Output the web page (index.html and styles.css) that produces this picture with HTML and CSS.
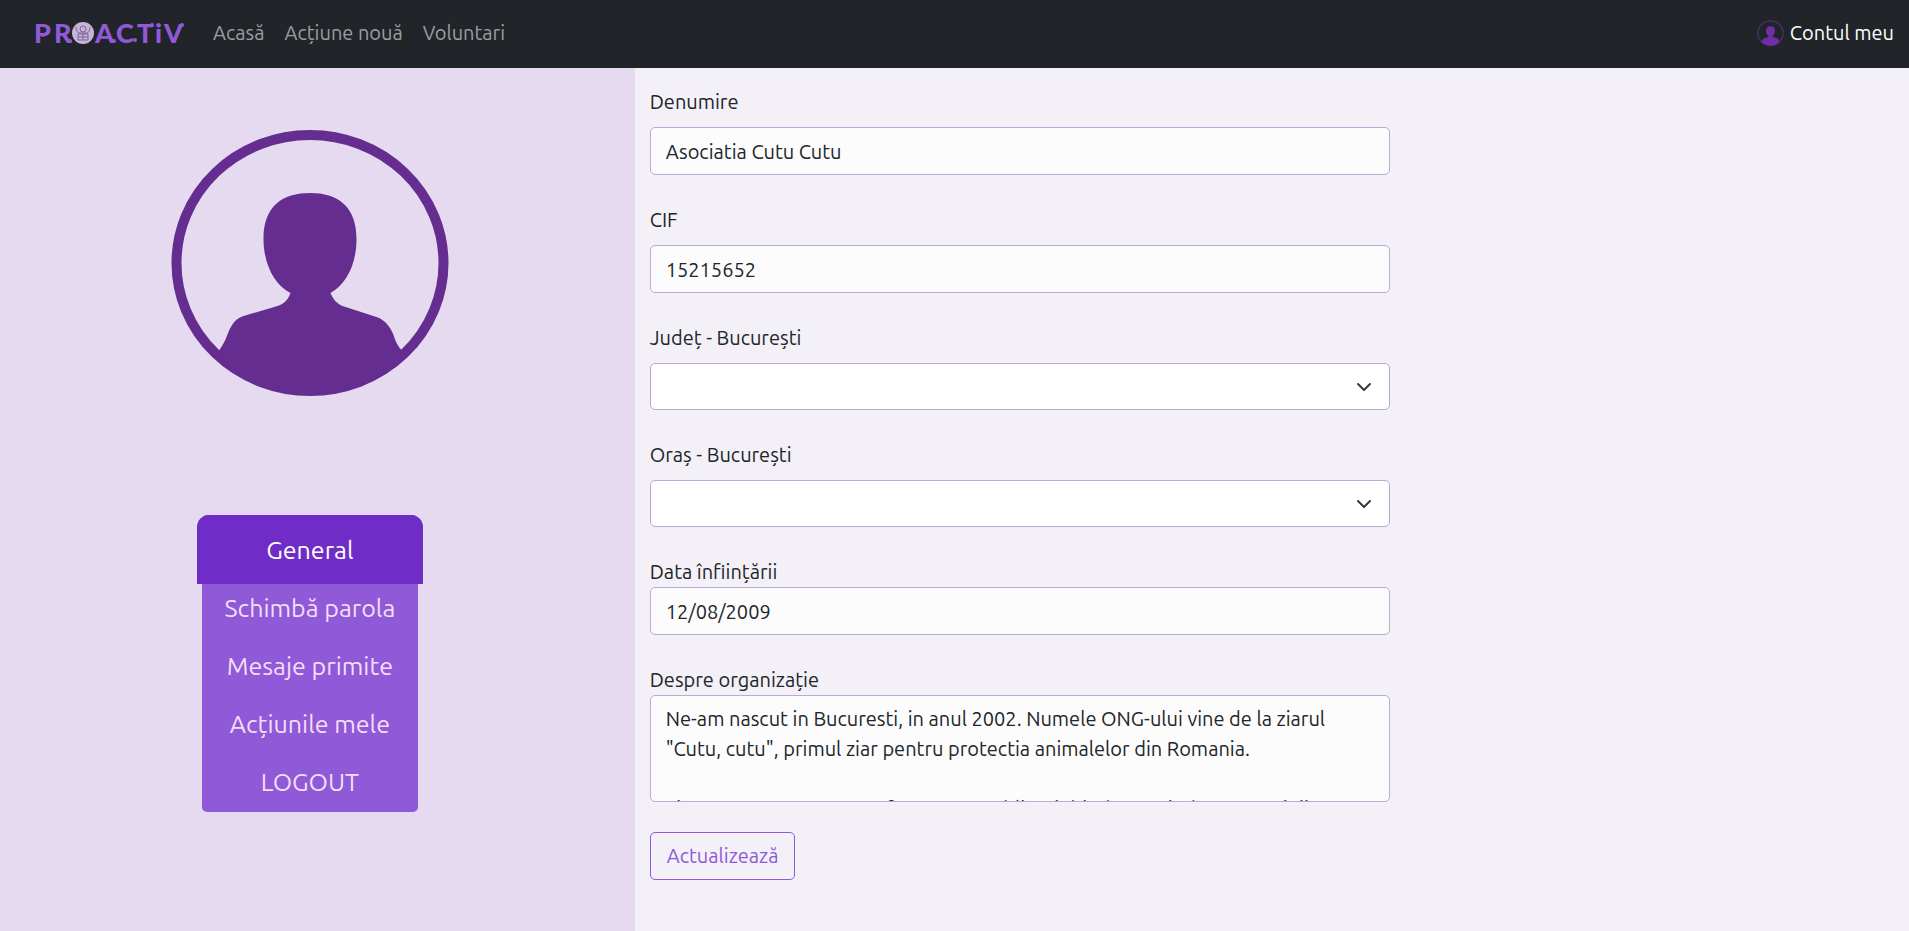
FILE: index.html
```html
<!DOCTYPE html>
<html lang="ro">
<head>
<meta charset="utf-8">
<title>Proactiv - Contul meu</title>
<link rel="stylesheet" href="styles.css">
</head>
<body>
<header class="navbar">
  <a class="brand" href="#" aria-label="Proactiv">
    <svg class="logo" width="152" height="36" viewBox="0 -6 152 36">
      <g class="logo-text">
        <text x="0 20 61 82 103 121 130" y="22">PRACTiV</text>
      </g>
      <g fill="#9059d8"><circle cx="9" cy="14" r="2"/><circle cx="36" cy="20" r="2"/><circle cx="80" cy="20" r="2"/><circle cx="101" cy="19" r="2"/><circle cx="118" cy="4" r="2"/><circle cx="148" cy="4" r="2"/></g>
      <circle cx="49" cy="12" r="11" fill="#c9b3dd"/>
      <g fill="none" stroke="#79678f" stroke-width="1"><circle cx="49" cy="8" r="3"/><path d="M42 6q0 6 4 6h6q4 0 4-6M44 13h10v6H44zM49 13v6M44 16h10"/></g>
    </svg>
  </a>
  <nav class="links">
    <a href="#">Acasă</a>
    <a href="#">Acțiune nouă</a>
    <a href="#">Voluntari</a>
  </nav>
  <a class="account" href="#">
    <svg class="account-icon" width="27" height="26" viewBox="0 0 277 266"><ellipse cx="138.500" cy="133" rx="130" ry="124" fill="none" stroke="#47306b" stroke-width="14"/><use href="#person"/></svg>
    <span>Contul meu</span>
  </a>
</header>
<main class="page">
  <aside class="sidebar">
    <svg class="avatar" width="278" height="266" viewBox="0 0 277 266" role="img" aria-label="Avatar">
      <ellipse cx="138.500" cy="133" rx="133.500" ry="128" fill="none" stroke="#652d90" stroke-width="10"/>
      <path id="person" d="M138.500 63C166 63 185 76 185 109C185 134 175 154 159 163C162 170 166 174 171 176L205 187C214 190 220 198 223 208C225 214 228 218 230 220L239 221C215 247 180 265 138.500 265C97 265 62 247 38 221L48 220C52 214 54 210 57 202C60 194 65 188 72 186L106 176C112 174 116 171 119 163C103 155 92 134 92 109C92 76 111 63 138.500 63Z"/>
    </svg>
    <nav class="menu">
      <a class="active" href="#">General</a>
      <a href="#">Schimbă parola</a>
      <a href="#">Mesaje primite</a>
      <a href="#">Acțiunile mele</a>
      <a href="#">LOGOUT</a>
    </nav>
  </aside>
  <section class="content">
    <form class="form">
      <div class="field spaced"><label for="name">Denumire</label><input id="name" type="text" value="Asociatia Cutu Cutu"></div>
      <div class="field spaced"><label for="cif">CIF</label><input id="cif" type="text" value="15215652"></div>
      <div class="field spaced"><label for="county">Județ - Bucureşti</label>
        <div class="select"><select id="county"><option></option></select><svg width="16" height="16" viewBox="0 0 16 16"><path d="M2 5l6 6 6-6"/></svg></div></div>
      <div class="field spaced"><label for="city">Oraș - Bucureşti</label>
        <div class="select"><select id="city"><option></option></select><svg width="16" height="16" viewBox="0 0 16 16"><path d="M2 5l6 6 6-6"/></svg></div></div>
      <div class="field"><label for="date">Data înființării</label><input id="date" type="text" value="12/08/2009"></div>
      <div class="field"><label for="about">Despre organizație</label><textarea id="about">Ne-am nascut in Bucuresti, in anul 2002. Numele ONG-ului vine de la ziarul "Cutu, cutu", primul ziar pentru protectia animalelor din Romania.

Si am crescut, ca o veste frumoasa, publica, iubind, ocrotind mereu cainii.</textarea></div>
      <button class="submit" type="button">Actualizează</button>
    </form>
  </section>
</main>
</body>
</html>
```
FILE: styles.css
```css
* { box-sizing: border-box; }
body {
  margin: 0;
  min-height: 100vh;
  display: flex;
  flex-direction: column;
  background: #f3f0f8;
  color: #212529;
  font: 20px/30px Ubuntu, "Noto Sans", sans-serif;
}
a { text-decoration: none; color: inherit; }
.navbar {
  display: flex;
  align-items: center;
  height: 68px;
  padding: 0 15px 3px 34px;
  background: #212529;
  color: #9b9d9f;
}
.brand { display: flex; margin-right: 27px; }
.logo { overflow: visible; }
.logo-text { font: 900 27px Lato, sans-serif; fill: #9059d8; }
.links { display: flex; gap: 20px; }
.account { display: flex; align-items: center; gap: 6px; margin-left: auto; color: #fff; }
.account-icon { fill: #6f2da8; }
.page { flex: 1; display: grid; grid-template-columns: 33.25% 1fr; }
.sidebar {
  display: flex;
  flex-direction: column;
  align-items: center;
  padding: 62px 15px 0 0;
  background: #e5daef;
}
.avatar { fill: #652d90; }
.menu {
  display: flex;
  flex-direction: column;
  width: 216px;
  margin-top: 119px;
  border-radius: 5px;
  background: #9059d8;
  color: #f3def8;
  font-size: 25px;
  line-height: 30px;
  text-align: center;
}
.menu a { padding: 9px 0 19px; }
.menu a:last-child { padding-bottom: 15px; }
.menu .active {
  margin: 0 -5px;
  padding: 20px 0 19px;
  border-radius: 12px 12px 0 0;
  background: #702cc7;
  color: #fff;
}
.content { padding: 19px 0 50px 15px; }
.form { width: 58.8%; display: flex; flex-direction: column; align-items: flex-start; gap: 30px; }
.field { width: 100%; display: flex; flex-direction: column; }
.spaced { gap: 10px; }
input, select, textarea {
  display: block;
  width: 100%;
  height: 48px;
  margin: 0;
  padding: 8px 15px;
  border: 1px solid #bba9d6;
  border-radius: 5px;
  background: #fcfcfc;
  color: #212529;
  font: inherit;
}
.select { display: grid; align-items: center; }
.select > * { grid-area: 1 / 1; }
select { height: 47px; appearance: none; background: #fff; }
.select svg { justify-self: end; margin-right: 18px; pointer-events: none; fill: none; stroke: #343a40; stroke-width: 2; stroke-linecap: round; stroke-linejoin: round; }
textarea { height: 107px; resize: none; overflow: hidden; }
.submit {
  height: 48px;
  padding: 0 16px;
  border: 1px solid #9059d8;
  border-radius: 5px;
  background: transparent;
  color: #9059d8;
  font: inherit;
}
```
